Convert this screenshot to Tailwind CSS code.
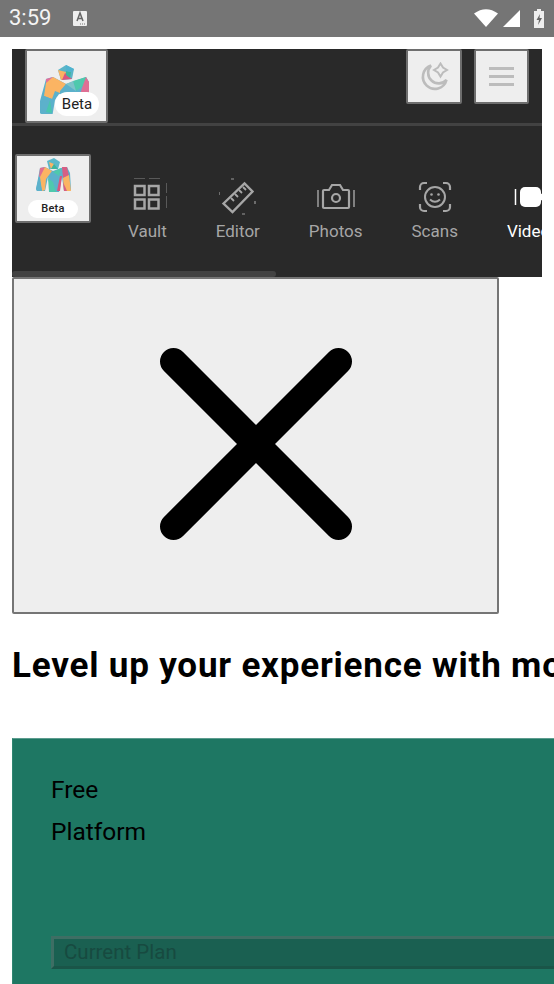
<!doctype html>
<html><head><meta charset="utf-8"><script src="https://cdn.jsdelivr.net/npm/@tailwindcss/browser@4"></script></head>
<body class="w-[554px] h-[984px] overflow-hidden bg-white font-['Roboto',sans-serif]">
<header class="h-[37px] bg-[#757575] flex items-center pl-[9px] pr-[9px] text-white">
  <span class="text-[22px] leading-none mt-[-2px] w-[54px] text-[#f4f4f4]">3:59</span>
  <svg width="16" height="17" viewBox="0 0 16 17" class="ml-[9px] mt-[-1px]"><path d="M2 1h12a1 1 0 0 1 1 1v13a1 1 0 0 1-1 1H2a1 1 0 0 1-1-1V2a1 1 0 0 1 1-1z" fill="#eee"/><path d="M5 11l3-8 3 8M6 8.500h4" stroke="#666" stroke-width="1.500" fill="none"/><path d="M8 14h1M10 14h1M12 14h1" stroke="#777" stroke-width="1"/></svg>
  <div class="ml-auto flex items-center gap-[4px] mt-[-1px]">
    <svg width="24" height="18" viewBox="0 0 24 18"><path d="M0 4.500Q12-4 24 4.500L12 18z" fill="#fff"/></svg>
    <svg width="18" height="18" viewBox="0 0 18 18" class="ml-[1px]"><path d="M17 1v17H0z" fill="#fff"/></svg>
    <svg width="12" height="19" viewBox="0 0 12 19" class="ml-[8px]"><path d="M4 0h4v2h3v17H1V2h3z" fill="#eee"/><path d="M7 5L3.500 11H6l-1 5 4-7H6.500z" fill="#666"/></svg>
  </div>
</header>
<main class="pl-[12px] pt-[12px] w-[554px]">
  <nav class="w-[530px] h-[228px] bg-[#292929] overflow-hidden relative">
    <div class="h-[77px] flex items-start pl-[13px] pr-[13px] border-b-[3px] border-[#424242]">
      <div class="relative w-[83px] h-[74px] bg-[#eee] border-2 border-[#6e6e6e] rounded-[2px] shrink-0">
        <svg width="50" height="49" viewBox="0 0 50 49" class="absolute left-[13px] top-[14px]">
          <path d="M18 5l8-5 8 4-2 10-11 1z" fill="#5bb5c8"/><path d="M18 5l8 2-2 7-3 1z" fill="#fbb463"/><path d="M22 15l3-7 7 6z" fill="#d9567e"/><path d="M26 6l5 1-1 6-4-3z" fill="#3fb59c"/><path d="M26 0l8 4-3 3-5-1z" fill="#4fb3cf"/>
          <path d="M6 14l7-2 13 7 20-7 3 5v20H36l-2-10-15 2-4 6-3 18-4-1-11-5z" fill="#5cb1cb"/>
          <path d="M6 14l7-2 2 7-9 8z" fill="#e0709b"/><path d="M13 12l13 7-6 9-5-2-3 8-8-3 2-13 7-6z" fill="#fbb463"/>
          <path d="M0 44l4-13 8 3-2 14z" fill="#5cb1cb"/><path d="M6 47l4-12 2 13z" fill="#49c6ae"/>
          <path d="M26 19l8 8-14 3 0-4z" fill="#5cb1cb"/><path d="M33 16l13-4 1 6-11 8z" fill="#4fc9ad"/><path d="M26 19l7-3 3 10z" fill="#7ec4c9"/>
          <path d="M46 12l3 5v20H38l4-14z" fill="#de6f94"/>
        </svg>
        <span class="absolute left-[28px] top-[41px] w-[44px] h-[24px] rounded-full bg-white text-[#222] text-[15px] leading-[24px] text-center">Beta</span>
      </div>
      <div class="ml-auto flex gap-[12px]">
        <button class="w-[56px] h-[55px] bg-[#eee] border-2 border-[#6e6e6e] rounded-[2px] flex items-center justify-center">
          <svg width="30" height="30" viewBox="0 0 30 30" fill="none"><path d="M12 3.500A12 12 0 1 0 27.500 18 10.500 10.500 0 0 1 12 3.500z" stroke="#bcbcbc" stroke-width="2.600"/><path d="M21.500 1.500l2.500 4 4 2.500-4 2.500-2.500 4-2.500-4-4-2.500 4-2.500z" stroke="#bcbcbc" stroke-width="2"/></svg>
        </button>
        <button class="w-[55px] h-[55px] bg-[#eee] border-2 border-[#6e6e6e] rounded-[2px] flex flex-col items-center justify-center gap-[5.500px]">
          <span class="block w-[25px] h-[2.500px] bg-[#bcbcbc]"></span><span class="block w-[25px] h-[2.500px] bg-[#bcbcbc]"></span><span class="block w-[25px] h-[2.500px] bg-[#bcbcbc]"></span>
        </button>
      </div>
    </div>
    <div class="flex items-start relative h-[151px]">
      <div class="relative w-[76px] h-[69px] mt-[28px] ml-[3px] bg-[#eee] border-2 border-[#6e6e6e] rounded-[2px] shrink-0">
        <svg width="35" height="35" viewBox="0 0 35 35" class="absolute left-[19px] top-[2px]">
          <path d="M11 3l7-3 6 4-2 7h-9z" fill="#5cb8c9"/><path d="M13 4l5 2-3 5z" fill="#fbb463"/><path d="M15 11l3-5 4 5z" fill="#3fb59c"/>
          <path d="M4 10l5-1 8 4 8-3 6-1 3 6 1 17-7 1-2-14-3 15h-8L12 19l-3 14H1L0 31z" fill="#5cb1cb"/>
          <path d="M4 10l5-1-1 8-5 2z" fill="#df6e90"/><path d="M9 9l7 4-6 8-1 11-3 1-2-14z" fill="#fbb463"/><path d="M0 31l3-12 3 14H1z" fill="#5cb1cb"/>
          <path d="M12 20l5 4 3 10h-7z" fill="#4fc9ad"/><path d="M17 14l8-4-2 8z" fill="#4fc9ad"/>
          <path d="M24 18l2 0-2 15h-3z" fill="#d9567e"/><path d="M26 9l5 0 2 9-6 2z" fill="#d65f84"/><path d="M27 20l6-3 2 16-7 0z" fill="#fbb463"/><path d="M27 24l4 9h-3z" fill="#d65f84"/>
        </svg>
        <span class="absolute left-[11px] top-[44px] w-[50px] h-[18px] rounded-full bg-white text-[#222] text-[11px] font-medium tracking-[0.3px] leading-[18px] text-center">Beta</span>
      </div>
      <ul class="flex items-start gap-[49px] ml-[37px] pt-[52px] shrink-0 text-[17px] leading-[20px] text-[#a6a6a6]">
        <li class="flex flex-col items-center">
          <svg width="38" height="38" viewBox="0 0 38 38" fill="none" stroke="#a6a6a6" class="mb-[5px] overflow-visible"><path d="M6 .5h11M21 .5h11M38.500 5v10M38.500 18v12" stroke-width=".8" stroke="#666"/><rect x="7" y="8" width="9.500" height="9" stroke-width="2.500"/><rect x="21" y="8" width="9.500" height="9" stroke-width="2.500"/><rect x="7" y="21.500" width="9.500" height="9" stroke-width="2.500"/><rect x="21" y="21.500" width="9.500" height="9" stroke-width="2.500"/></svg>
          <span>Vault</span>
        </li>
        <li class="flex flex-col items-center">
          <svg width="38" height="38" viewBox="0 0 38 38" fill="none" stroke="#a6a6a6" class="mb-[5px]"><path d="M4.500 25.500L25.500 5.500l8 8-20 20.500z" stroke-width="2.400"/><path d="M12 20l3 3M16 16l3 3M20 12l3 3M24 9l3 3" stroke-width="1.800"/><path d="M12 1h3M0 14v3M36 23v3M23 36h3" stroke-width="1.200" stroke="#999"/></svg>
          <span>Editor</span>
        </li>
        <li class="flex flex-col items-center">
          <svg width="38" height="38" viewBox="0 0 38 38" fill="none" stroke="#a6a6a6" class="mb-[5px]"><path d="M7 12h5l3-5h8l3 5h5a1 1 0 0 1 1 1v16a1 1 0 0 1-1 1H7a1 1 0 0 1-1-1V13a1 1 0 0 1 1-1z" stroke-width="2.200"/><circle cx="19" cy="20" r="4" stroke-width="2.200"/><path d="M1 12v17M37 12v17" stroke-width="1.400"/></svg>
          <span>Photos</span>
        </li>
        <li class="flex flex-col items-center">
          <svg width="38" height="38" viewBox="0 0 38 38" fill="none" stroke="#a6a6a6" class="mb-[5px]"><path d="M11 5H8a4 4 0 0 0-4 4v3M27 5h3a4 4 0 0 1 4 4v3M11 33H8a4 4 0 0 1-4-4v-3M27 33h3a4 4 0 0 0 4-4v-3" stroke-width="2.200"/><circle cx="19" cy="19" r="10" stroke-width="2"/><circle cx="15.500" cy="16.500" r="1.300" fill="#a6a6a6" stroke="none"/><circle cx="22.500" cy="16.500" r="1.300" fill="#a6a6a6" stroke="none"/><path d="M14 21.500q5 4.500 10 0" stroke-width="2"/></svg>
          <span>Scans</span>
        </li>
        <li class="flex flex-col items-center text-white">
          <svg width="38" height="38" viewBox="0 0 38 38" class="mb-[5px]"><path d="M1.500 11v16" stroke="#fff" stroke-width="1.500"/><rect x="6" y="9" width="21" height="20" rx="5" fill="#fff"/><path d="M27 16l8-4v14l-8-4z" fill="#fff"/></svg>
          <span>Videos</span>
        </li>
      </ul>
      <div class="absolute left-0 top-[145px] h-[6px] w-[264px] bg-[#424242] rounded-full"></div>
    </div>
  </nav>
  <section class="w-[487px] h-[337px] bg-[#eee] border-2 border-[#757575] rounded-[2px] flex items-center justify-center">
    <svg width="192" height="192" viewBox="0 0 192 192" class="mb-[4px]"><path d="M13.500 13.500L178.500 178.500M178.500 13.500L13.500 178.500" stroke="#000" stroke-width="27" stroke-linecap="round"/></svg>
  </section>
  <h1 class="mt-[30px] text-[35px] tracking-[0.8px] leading-[44px] font-bold text-black whitespace-nowrap">Level up your experience with more</h1>
  <article class="mt-[50px] w-[700px] h-[246px] bg-[#1e7763] border-t border-l border-t-[#5c9c8e] border-l-[#2f8571] pl-[38px] pt-[35px] text-black">
    <p class="text-[24.500px] leading-[32px]">Free</p>
    <p class="text-[24.500px] leading-[32px] mt-[10px]">Platform</p>
    <div class="mt-[88px] h-[33px] bg-[#1a6051] border-[3px] border-t-[#3e6e64] border-l-[#3e6e64] border-r-[#3e6e64] border-b-[#1a5548] pl-[10px] text-[20.500px] leading-[26px] text-[#174a40]">Current Plan</div>
  </article>
</main>
</body></html>
